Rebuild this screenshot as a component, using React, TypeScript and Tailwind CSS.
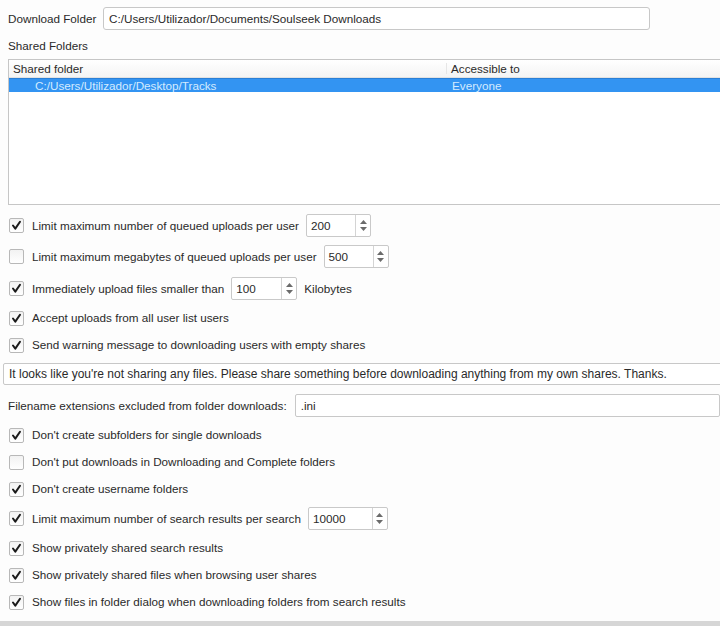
import React from "react"

// Soulseek "Shares / Transfers" options page, Qt on Windows look.

const FONT = "font-['Liberation_Sans',Arial,sans-serif]"

function Check({ checked }: { checked: boolean }) {
  return (
    <span className="w-[15px] h-[15px] shrink-0 border border-[#b8b8b8] rounded-[2px] bg-gradient-to-b from-[#f2f2f2] to-[#ffffff] flex items-center justify-center">
      {checked && (
        <svg width="11" height="11" viewBox="0 0 11 11">
          <path d="M2 5.5 L4.3 8.6 L9 1.8" fill="none" stroke="#1a1a1a" strokeWidth="2" strokeLinejoin="round" strokeLinecap="round" />
        </svg>
      )}
    </span>
  )
}

function Spin({ value, width }: { value: string; width: string }) {
  return (
    <div className={`${width} h-[23px] flex border border-[#c9c9c9] rounded-[2px] bg-white`}>
      <div className="flex-1 flex items-center pl-[4px]">{value}</div>
      <div className="w-[15px] border-l border-[#d4d4d4] flex flex-col items-center justify-center gap-[3px]">
        <svg width="7" height="4" viewBox="0 0 7 4"><path d="M0 4 L3.5 0 L7 4 Z" fill="#6b6b6b" /></svg>
        <svg width="7" height="4" viewBox="0 0 7 4"><path d="M0 0 L3.5 4 L7 0 Z" fill="#6b6b6b" /></svg>
      </div>
    </div>
  )
}

function Row({ checked, label, children }: { checked: boolean; label: string; children?: React.ReactNode }) {
  return (
    <div className="mt-[9px] h-[18px] flex items-center pl-[9px]">
      <Check checked={checked} />
      <span className="ml-[8px] whitespace-nowrap">{label}</span>
      {children}
    </div>
  )
}

export default function App() {
  return (
    <div className={`w-[720px] h-[626px] overflow-hidden bg-[#fdfdfd] text-[#2a2a2a] text-[11.7px] leading-none ${FONT} flex flex-col`}>
      {/* download folder */}
      <div className="mt-[7px] h-[23px] flex items-center">
        <span className="pl-[8px] w-[103px]">Download Folder</span>
        <div className="w-[547px] h-[23px] flex items-center pl-[5px] border border-[#c8c8c8] rounded-[3px] bg-white">
          C:/Users/Utilizador/Documents/Soulseek Downloads
        </div>
      </div>

      <div className="mt-[9px] h-[14px] pl-[8px] flex items-center">Shared Folders</div>

      {/* shared folder list */}
      <div className="mt-[6px] ml-[8px] w-[720px] h-[146px] border border-[#c6c6c6] bg-white">
        <div className="h-[18px] flex items-center border-b border-[#e2e2e2] bg-gradient-to-b from-white to-[#f4f4f4]">
          <span className="w-[438px] pl-[4px] border-r border-[#e6e6e6]">Shared folder</span>
          <span className="pl-[4px]">Accessible to</span>
        </div>
        <div className="h-[14px] flex items-center bg-[#3394f2] border-t border-[#2a7fd6] text-[#d3ebff]">
          <span className="w-[438px] pl-[26px]">C:/Users/Utilizador/Desktop/Tracks</span>
          <span className="pl-[5px]">Everyone</span>
        </div>
      </div>

      <div className="mt-[9px] h-[23px] flex items-center pl-[9px]">
        <Check checked />
        <span className="ml-[8px] mr-[7px] whitespace-nowrap">Limit maximum number of queued uploads per user</span>
        <Spin value="200" width="w-[65px]" />
      </div>
      <div className="mt-[8px] h-[23px] flex items-center pl-[9px]">
        <Check checked={false} />
        <span className="ml-[8px] mr-[7px] whitespace-nowrap">Limit maximum megabytes of queued uploads per user</span>
        <Spin value="500" width="w-[65px]" />
      </div>
      <div className="mt-[9px] h-[23px] flex items-center pl-[9px]">
        <Check checked />
        <span className="ml-[8px] mr-[7px] whitespace-nowrap">Immediately upload files smaller than</span>
        <Spin value="100" width="w-[66px]" />
        <span className="ml-[7px]">Kilobytes</span>
      </div>
      <Row checked label="Accept uploads from all user list users" />
      <Row checked label="Send warning message to downloading users with empty shares" />

      <div className="mt-[9px] ml-[3px] w-[730px] h-[22px] flex items-center pl-[5px] border border-[#c8c8c8] rounded-[2px] bg-white whitespace-nowrap text-[12px]">
        It looks like you're not sharing any files. Please share something before downloading anything from my own shares. Thanks.
      </div>

      <div className="mt-[9px] h-[23px] flex items-center">
        <span className="pl-[8px] w-[298px] whitespace-nowrap">Filename extensions excluded from folder downloads:</span>
        <div className="w-[430px] h-[23px] flex items-center pl-[5px] border border-[#c8c8c8] rounded-[2px] bg-white">.ini</div>
      </div>

      <Row checked label="Don't create subfolders for single downloads" />
      <Row checked={false} label="Don't put downloads in Downloading and Complete folders" />
      <Row checked label="Don't create username folders" />
      <div className="mt-[9px] h-[23px] flex items-center pl-[9px]">
        <Check checked />
        <span className="ml-[8px] mr-[7px] whitespace-nowrap">Limit maximum number of search results per search</span>
        <Spin value="10000" width="w-[80px]" />
      </div>
      <Row checked label="Show privately shared search results" />
      <Row checked label="Show privately shared files when browsing user shares" />
      <Row checked label="Show files in folder dialog when downloading folders from search results" />

      <div className="mt-auto h-[5px] bg-[#d6d6d6]" />
    </div>
  )
}
